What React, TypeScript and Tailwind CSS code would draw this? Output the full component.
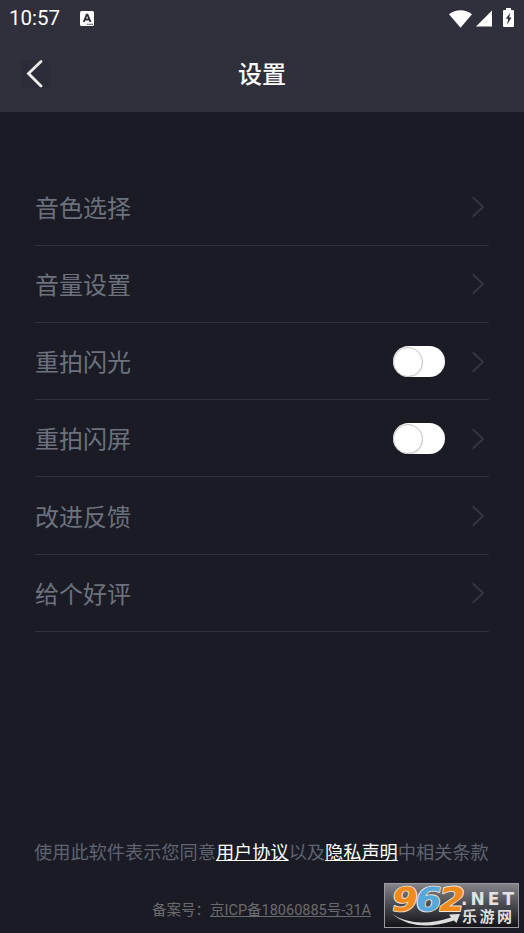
import React, { useState } from 'react';

const ChevronRight: React.FC = () => (
  <svg className="h-[22px] w-[14px] shrink-0" viewBox="0 0 14 22" fill="none" stroke="#353641" strokeWidth="1.9">
    <path d="M1.7 1.2 12 11 1.7 20.8" />
  </svg>
);

const StatusBar: React.FC = () => (
  <div className="flex h-9 items-center pl-[9px] pr-[10px] pt-px">
    <span className="w-[52px] font-['Roboto',sans-serif] text-[20.5px] leading-none font-[450] text-white">10:57</span>
    <svg className="ml-[19px] h-[15px] w-[14px]" viewBox="0 0 14 15">
      <rect width="14" height="15" rx="1.5" fill="#fff" />
      <path d="M3.7 11 6.7 3.7h.8l3 7.3M4.8 8.5h4.5" fill="none" stroke="#30303c" strokeWidth="1.9" />
      <path d="M7.3 13.4h1.2M9.4 13.4h1.2M11.5 13.4h1.2" stroke="#30303c" strokeWidth="1.2" />
    </svg>
    <div className="ml-auto flex items-center">
      <svg className="h-[18px] w-[23px]" viewBox="0 0 23 18" fill="#fff">
        <path d="M0 4.3C6.8-1.2 16.2-1.2 23 4.3L11.5 17.8z" />
      </svg>
      <svg className="ml-[4px] h-[17px] w-[16px]" viewBox="0 0 16 17" fill="#fff">
        <path d="M16 .5v16H0z" />
      </svg>
      <svg className="ml-[11px] mb-[2px] h-[19px] w-[11px]" viewBox="0 0 11 19">
        <path d="M3 0h5v2h2q1 0 1 1v15q0 1-1 1H1q-1 0-1-1V3q0-1 1-1h2z" fill="#fff" />
        <path d="M7.2 4.8 2.8 10.8h2.4L4.1 16.7 8.5 9.4H6.2z" fill="#30303c" />
      </svg>
    </div>
  </div>
);

interface ToggleProps {
  label: string;
}

const Toggle: React.FC<ToggleProps> = ({ label }) => {
  const [on, setOn] = useState(false);

  return (
    <button
      role="switch"
      aria-checked={on}
      aria-label={label}
      onClick={() => setOn(!on)}
      className={`flex h-[31px] w-[52px] items-center rounded-full ${on ? 'justify-end bg-[#4c8bf5]' : 'bg-white'}`}
    >
      <span className="size-[30px] rounded-full border border-[#c4c4c6] bg-white shadow-[0_1px_1px_rgba(0,0,0,0.1)]" />
    </button>
  );
};

const rows = [
  { label: '音色选择', toggle: false },
  { label: '音量设置', toggle: false },
  { label: '重拍闪光', toggle: true },
  { label: '重拍闪屏', toggle: true },
  { label: '改进反馈', toggle: false },
  { label: '给个好评', toggle: false },
];

const Watermark: React.FC = () => (
  <svg className="absolute top-[883px] left-[384px] h-[45px] w-[135px]" viewBox="0 0 135 45">
    <defs>
      <linearGradient id="plate" x1="0" y1="0" x2="0" y2="1">
        <stop offset="0" stopColor="#85858b" />
        <stop offset="0.5" stopColor="#48484f" />
        <stop offset="1" stopColor="#111116" />
      </linearGradient>
    </defs>
    <rect x="0.5" y="0.5" width="134" height="44" fill="url(#plate)" stroke="#99999e" />
    <path d="M8 31Q31 46 67 34.5L65 31.5 76 31 72.5 40 70 37.5Q31 50 8 31" fill="#dededf" />
    <g
      fontFamily="'DejaVu Sans', sans-serif"
      fontWeight="bold"
      fontSize="33"
      stroke="#f3e6d6"
      strokeWidth="1.8"
      paintOrder="stroke"
      strokeLinejoin="round"
      transform="translate(5 0) skewX(-10)"
    >
      <text x="6" y="28" textLength="26" lengthAdjust="spacingAndGlyphs" fill="#f08a1d">9</text>
      <text x="29.5" y="28" textLength="26" lengthAdjust="spacingAndGlyphs" fill="#55a7dc">6</text>
      <text x="53" y="28" textLength="26" lengthAdjust="spacingAndGlyphs" fill="#f08a1d">2</text>
    </g>
    <text x="77" y="22" textLength="53" lengthAdjust="spacing" fontFamily="'DejaVu Sans', sans-serif" fontWeight="bold" fontSize="17" fill="#e3e3e5">.NET</text>
    <text x="78" y="39" textLength="50" lengthAdjust="spacing" fontFamily="'Noto Sans CJK SC', sans-serif" fontWeight="bold" fontSize="15" fill="#dededf">乐游网</text>
  </svg>
);

const App: React.FC = () => {
  return (
    <div className="relative flex h-[933px] w-[524px] flex-col overflow-hidden bg-[#1b1b26] font-['Roboto','Noto_Sans_CJK_SC',sans-serif]">
      <header className="h-[112px] bg-[#30303c]">
        <StatusBar />
        <div className="grid h-[76px] grid-cols-[1fr_auto_1fr] items-center">
          <button aria-label="返回" className="ml-[21px] flex size-7 items-center justify-center bg-[#2c2c38]">
            <svg className="h-7 w-7" viewBox="0 0 28 28" fill="none" stroke="#ededee" strokeWidth="2.8" strokeLinecap="round">
              <path d="M20 1.5 7.5 13.5 20 26" />
            </svg>
          </button>
          <h1 className="pt-0.5 text-2xl font-medium text-white">设置</h1>
        </div>
      </header>

      <main className="mx-[35px] mt-[56.4px]">
        {rows.map((row) => (
          <div key={row.label} className="flex h-[77.25px] items-center border-b border-[#31313c] pt-px pr-[4px]">
            <span className="pt-[3px] text-2xl text-[#6c727d]">{row.label}</span>
            <div className="ml-auto flex items-center gap-[26px]">
              {row.toggle && <Toggle label={row.label} />}
              <ChevronRight />
            </div>
          </div>
        ))}
      </main>

      <footer className="mt-[207px] whitespace-nowrap">
        <p className="pl-[34px] text-[18.2px] leading-7 text-[#5f6470]">
          使用此软件表示您同意
          <a href="#" className="text-white underline">用户协议</a>
          以及
          <a href="#" className="text-white underline">隐私声明</a>
          中相关条款
        </p>
        <p className="mt-[32px] pl-[152px] text-[14.5px] leading-6 text-[#6b6b6d]">
          备案号：<a href="#" className="underline">京ICP备18060885号-31A</a>
        </p>
      </footer>

      <Watermark />
    </div>
  );
};

export default App;
